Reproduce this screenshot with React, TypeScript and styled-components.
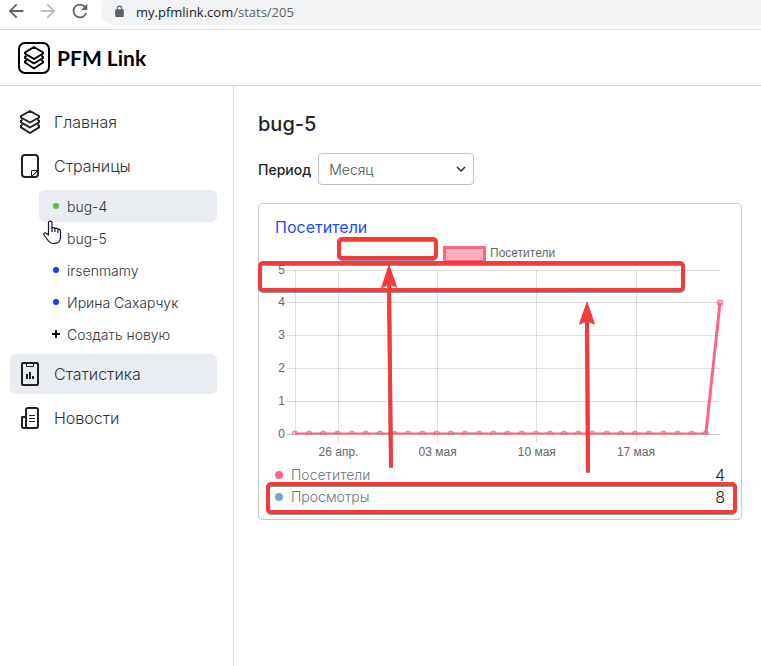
import React from "react";
import styled, { createGlobalStyle } from "styled-components";

const RED = "#f43b3b";
const PINK = "#ff6384";

const GlobalStyle = createGlobalStyle`
  *, *::before, *::after { box-sizing: border-box; }
  body {
    margin: 0;
    background: #fff;
    color: #212529;
    font-family: Inter, "Noto Sans", sans-serif;
  }
  button, select { font: inherit; color: inherit; }
`;

const Page = styled.div`
  position: relative;
  display: flex;
  flex-direction: column;
  min-height: 100vh;
  overflow: hidden;
`;

const BrowserBar = styled.div`
  display: flex;
  align-items: flex-start;
  height: 30px;
  padding-left: 5px;
  border-bottom: 1px solid #dadce0;
`;

const BrowserButton = styled.button<{ $muted?: boolean }>`
  display: flex;
  flex: none;
  width: 32px;
  height: 22px;
  padding: 0;
  border: 0;
  background: none;
  color: ${(p) => (p.$muted ? "#babcbe" : "#5f6368")};
`;

const AddressBar = styled.div`
  display: flex;
  flex: 1;
  align-items: center;
  gap: 10px;
  height: 25px;
  padding: 0 0 2px 12px;
  border-radius: 0 0 0 14px;
  background: #f1f3f4;
  color: #5f6368;
  font: 13px/20px "Open Sans", "Noto Sans", sans-serif;
`;

const Host = styled.span`
  color: #202124;
`;

const Header = styled.header`
  display: flex;
  align-items: center;
  height: 56px;
  padding-left: 18px;
  border-bottom: 1px solid #dadada;
`;

const Brand = styled.a`
  display: flex;
  align-items: center;
  gap: 7px;
  color: #000;
  font: 700 21px/28px Lato, sans-serif;
  text-decoration: none;
`;

const Body = styled.div`
  display: flex;
  flex: 1;
`;

const Sidebar = styled.nav`
  display: flex;
  flex: none;
  flex-direction: column;
  gap: 4px;
  width: 234px;
  padding: 16px 16px 16px 10px;
  border-right: 1px solid #dadada;
`;

const NavItem = styled.a<{ $active?: boolean }>`
  display: flex;
  align-items: center;
  gap: 12px;
  height: 40px;
  padding: 0 8px;
  border-radius: 6px;
  background: ${(p) => (p.$active ? "#e9edf2" : "transparent")};
  color: #2f3337;
  font-size: 16px;
  font-weight: 300;
  text-decoration: none;
`;

const SubList = styled.div`
  display: flex;
  flex-direction: column;
  padding-left: 29px;
`;

const SubItem = styled.a<{ $active?: boolean }>`
  display: flex;
  align-items: center;
  gap: 6px;
  height: 32px;
  padding: 1px 12px 0;
  border-radius: 6px;
  background: ${(p) => (p.$active ? "#e9edf2" : "transparent")};
  color: #2f3337;
  font-size: 14px;
  font-weight: 300;
  text-decoration: none;
`;

const Marker = styled.svg`
  flex: none;
  margin-bottom: 2px;
`;

const Main = styled.main`
  flex: 1;
  min-width: 0;
  padding: 24px 19px 24px 24px;
`;

const Title = styled.h1`
  margin: 0 0 15px;
  font-size: 20px;
  font-weight: 500;
  line-height: 28px;
`;

const Filter = styled.div`
  display: flex;
  align-items: center;
  gap: 7px;
  margin-bottom: 18px;
  font-size: 14px;
  line-height: 20px;
`;

const FilterLabel = styled.label`
  padding-top: 2px;
  font-weight: 500;
`;

const SelectBox = styled.div`
  position: relative;
  width: 156px;
`;

const Select = styled.select`
  display: block;
  width: 100%;
  height: 32px;
  padding: 2px 28px 0 10px;
  appearance: none;
  border: 1px solid #bfc1c4;
  border-radius: 4px;
  background: #fff;
  color: #495057;
  font-weight: 300;
`;

const Chevron = styled.svg`
  position: absolute;
  top: 10px;
  right: 7px;
  pointer-events: none;
`;

const Card = styled.section`
  position: relative;
  padding: 11px 16px;
  border: 1px solid #c8c9cb;
  border-radius: 4px;
`;

const CardTitle = styled.h2`
  margin: 0;
  color: #1c4cff;
  font-size: 16px;
  font-weight: 400;
  line-height: 24px;
`;

const Chart = styled.svg`
  display: block;
  width: 100%;
  height: auto;
  font-family: "Liberation Sans", Arial, sans-serif;
  font-size: 12px;
  fill: #666;
`;

const Total = styled.div`
  display: flex;
  align-items: center;
  gap: 8px;
  height: 22px;
  color: #6c757d;
  font-size: 14px;
  font-weight: 300;
  line-height: 20px;
`;

const Dot = styled.span<{ $color: string }>`
  width: 8px;
  height: 8px;
  border-radius: 50%;
  background: ${(p) => p.$color};
`;

const TotalValue = styled.span`
  margin-left: auto;
  color: #212529;
  font-size: 16px;
`;

const Annotations = styled.svg`
  position: absolute;
  top: -1px;
  left: -1px;
  width: calc(100% + 2px);
  height: calc(100% + 2px);
  overflow: visible;
  pointer-events: none;
  filter: drop-shadow(0 1px 0 rgba(70, 80, 80, 0.6));
`;

const Pointer = styled.svg`
  position: absolute;
  top: 219px;
  left: 42px;
  pointer-events: none;
`;

function LogoIcon() {
  return (
    <svg width="32" height="32" viewBox="0 0 32 32" fill="none" stroke="#000" strokeWidth="2" strokeLinejoin="round">
      <rect x="1" y="1" width="30" height="30" rx="6" />
      <path d="M16 5 25 10.500v1L16 17l-9-5.500v-1z" />
      <path d="M8.500 13.500 7 15v1l9 5.500 9-5.500v-1l-1.500-1.500" />
      <path d="M8.500 18 7 19.500v1l9 6 9-6v-1L23.500 18" />
    </svg>
  );
}

const iconProps = {
  width: 24,
  height: 24,
  viewBox: "0 0 24 24",
  fill: "none",
  stroke: "#212121",
  strokeWidth: 2,
  strokeLinejoin: "round" as const,
};

function HomeIcon() {
  return (
    <svg {...iconProps}>
      <path d="M12 1 21 6v1.500L12 12.500 3 7.500V6z" />
      <path d="M4.500 9.500 3 10.800v1.500l9 5.200 9-5.200v-1.500l-1.500-1.300" />
      <path d="M4.500 14.500 3 15.800v1.500l9 5.700 9-5.700v-1.500l-1.500-1.300" />
    </svg>
  );
}

function PageIcon() {
  return (
    <svg {...iconProps}>
      <rect x="4" y="1" width="16" height="22" rx="3" />
      <path d="M13.500 22.500v-6H20zM14 22l6-5.500" strokeWidth="1" />
    </svg>
  );
}

function StatsIcon() {
  return (
    <svg {...iconProps}>
      <rect x="4" y="1" width="16" height="22" rx="1" />
      <path d="M8.500 2v2.500h7V2" strokeWidth="1" />
      <path d="M9 12v5M12 10v7M15 14v3" strokeWidth="2" />
    </svg>
  );
}

function NewsIcon() {
  return (
    <svg {...iconProps}>
      <path d="M8 22V4a2 2 0 0 1 2-2h8a2 2 0 0 1 2 2v16a2 2 0 0 1-2 2H6a2 2 0 0 1-2-2v-9h4" />
      <path d="M11 9.500h6M11 12.500h6M11 15.500h6" strokeWidth="1" />
    </svg>
  );
}

const pages = [
  { name: "bug-4", color: "#5fbb46", active: true },
  { name: "bug-5" },
  { name: "irsenmamy", color: "#0b3dff" },
  { name: "Ирина Сахарчук", color: "#0b3dff" },
];

const values = Array.from({ length: 31 }, (_, i) => (i === 30 ? 4 : 0));
const rows = [
  { value: 5, y: 31 },
  { value: 4, y: 63 },
  { value: 3, y: 96 },
  { value: 2, y: 129 },
  { value: 1, y: 162 },
  { value: 0, y: 195 },
];
const days = [
  { label: "26 апр.", index: 3 },
  { label: "03 мая", index: 10 },
  { label: "10 мая", index: 17 },
  { label: "17 мая", index: 24 },
];
const px = (i: number) => 20 + (i * 425) / 30;
const py = (v: number) => 195 - v * 32.8;

function VisitorsChart() {
  const line = values.map((v, i) => `${px(i)},${py(v)}`).join(" ");
  return (
    <Chart viewBox="0 0 450 225" role="img" aria-label="Посетители">
      <g stroke="#000" strokeOpacity="0.12" strokeWidth="1">
        {rows.map((r) => (
          <path key={r.value} d={`M12 ${r.y + 0.5}H445`} />
        ))}
        <path d="M20.500 31V195" />
        {days.map((d) => (
          <path key={d.label} d={`M${Math.floor(px(d.index)) + 1}.5 31V203`} />
        ))}
        <path d="M12 195.500H445" />
      </g>
      {rows.map((r) => (
        <text key={r.value} x="10" y={r.y + 4} textAnchor="end">{r.value}</text>
      ))}
      {days.map((d) => (
        <text key={d.label} x={px(d.index) + 1} y="217" textAnchor="middle">{d.label}</text>
      ))}
      <rect x="169.500" y="8.500" width="40" height="14" fill="#ffb1c1" stroke={PINK} strokeWidth="3" />
      <text x="215" y="18">Посетители</text>
      <clipPath id="plot">
        <rect x="0" y="20" width="450" height="175.500" />
      </clipPath>
      <g clipPath="url(#plot)" stroke={PINK}>
        <polyline points={line} fill="none" strokeWidth="3" strokeLinejoin="round" />
        {values.map((v, i) => (
          <circle key={i} cx={px(i)} cy={py(v)} r="3" fill={PINK} fillOpacity="0.5" strokeOpacity="0.8" />
        ))}
      </g>
    </Chart>
  );
}

export default function App() {
  return (
    <Page>
      <GlobalStyle />
      <BrowserBar>
        <BrowserButton aria-label="Назад">
          <svg width="22" height="22" viewBox="0 0 24 24" fill="currentColor">
            <path d="M20 11H7.830l5.590-5.590L12 4l-8 8 8 8 1.410-1.410L7.830 13H20z" />
          </svg>
        </BrowserButton>
        <BrowserButton aria-label="Вперёд" $muted>
          <svg width="22" height="22" viewBox="0 0 24 24" fill="currentColor">
            <path d="M12 4l-1.410 1.410L16.170 11H4v2h12.170l-5.580 5.590L12 20l8-8z" />
          </svg>
        </BrowserButton>
        <BrowserButton aria-label="Обновить">
          <svg width="22" height="22" viewBox="0 0 24 24" fill="currentColor">
            <path d="M17.650 6.350A7.960 7.960 0 0 0 12 4a8 8 0 1 0 7.730 10h-2.080A6 6 0 1 1 12 6c1.660 0 3.140.69 4.220 1.780L13 11h7V4z" />
          </svg>
        </BrowserButton>
        <AddressBar>
          <svg width="13" height="13" viewBox="0 0 24 24" fill="currentColor">
            <path d="M18 8h-1V6A5 5 0 0 0 7 6v2H6a2 2 0 0 0-2 2v10c0 1.100.9 2 2 2h12a2 2 0 0 0 2-2V10a2 2 0 0 0-2-2zM9 6a3 3 0 0 1 6 0v2H9z" />
          </svg>
          <span><Host>my.pfmlink.com</Host>/stats/205</span>
        </AddressBar>
      </BrowserBar>

      <Header>
        <Brand href="#"><LogoIcon />PFM Link</Brand>
      </Header>

      <Body>
        <Sidebar>
          <NavItem href="#"><HomeIcon />Главная</NavItem>
          <NavItem href="#"><PageIcon />Страницы</NavItem>
          <SubList>
            {pages.map((p) => (
              <SubItem key={p.name} href="#" $active={p.active}>
                <Marker width="10" height="10" viewBox="0 0 10 10">
                  {p.color && <circle cx="5" cy="5" r="3" fill={p.color} />}
                </Marker>
                {p.name}
              </SubItem>
            ))}
            <SubItem href="#">
              <Marker width="10" height="10" viewBox="0 0 10 10">
                <path d="M5 1v8M1 5h8" stroke="#000" strokeWidth="2" />
              </Marker>
              Создать новую
            </SubItem>
          </SubList>
          <NavItem href="#" $active><StatsIcon />Статистика</NavItem>
          <NavItem href="#"><NewsIcon />Новости</NavItem>
        </Sidebar>

        <Main>
          <Title>bug-5</Title>
          <Filter>
            <FilterLabel htmlFor="period">Период</FilterLabel>
            <SelectBox>
              <Select id="period" defaultValue="month">
                <option value="month">Месяц</option>
              </Select>
              <Chevron width="12" height="12" viewBox="0 0 12 12" fill="none" stroke="#212529" strokeWidth="1.500">
                <path d="M2 4l4 4 4-4" />
              </Chevron>
            </SelectBox>
          </Filter>
          <Card>
            <CardTitle>Посетители</CardTitle>
            <VisitorsChart />
            <Total><Dot $color={PINK} />Посетители<TotalValue>4</TotalValue></Total>
            <Total><Dot $color="#78a3d4" />Просмотры<TotalValue>8</TotalValue></Total>
            <Annotations viewBox="0 0 484 317" preserveAspectRatio="none">
              <g fill="none" stroke={RED} strokeWidth="4">
                <rect x="81" y="36" width="97" height="19" rx="3" />
                <rect x="2" y="60" width="423" height="27" rx="3" />
                <rect x="10" y="281" width="467" height="28" rx="3" />
                <path d="M131 80 133 264M329 114 330 269" />
              </g>
              <path fill={RED} d="M131 61 139 84 131 81 123 85z" />
              <path fill={RED} d="M329 98 337 121 329 118 321 121z" />
            </Annotations>
          </Card>
        </Main>
      </Body>

      <Pointer width="20" height="26" viewBox="0 0 20 26" fill="#fff" stroke="#10142a" strokeWidth="1.200" strokeLinejoin="round">
        <path d="M6.500 16V3.500a1.800 1.800 0 0 1 3.500 0V9q1.500-1 3 .5 1.500-.8 2.800.7 2.200-.4 2.700 1.800v6c0 4-2.500 6.500-7 6.500-3.500 0-5-2-6.500-4.500L2 16c-.8-2 1-2.800 2.300-1.700z" />
        <path d="M10 9v4M13 9.500V13M15.800 10.500V14" />
      </Pointer>
    </Page>
  );
}
